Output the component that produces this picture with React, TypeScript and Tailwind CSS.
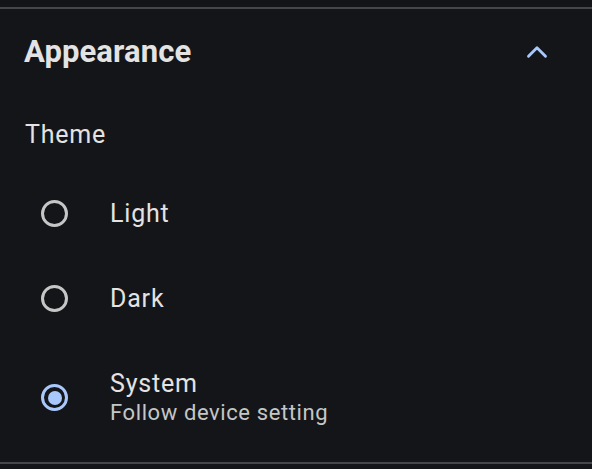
import { ChevronUp } from "lucide-react";

type Option = { id: string; label: string; hint?: string };

const options: Option[] = [
  { id: "light", label: "Light" },
  { id: "dark", label: "Dark" },
  { id: "system", label: "System", hint: "Follow device setting" },
];

const Radio = ({ checked }: { checked: boolean }) =>
  checked ? (
    <span className="grid h-[27px] w-[27px] shrink-0 place-items-center rounded-full border-[3px] border-[#a8c7fa]">
      <span className="h-[14px] w-[14px] rounded-full bg-[#a8c7fa]" />
    </span>
  ) : (
    <span className="h-[27px] w-[27px] shrink-0 rounded-full border-[3px] border-[#c4c7c5]" />
  );

const App = () => {
  const selected = "system";
  return (
    <div className="h-[469px] w-[592px] overflow-hidden bg-[#141519] font-['Roboto',sans-serif] text-[#e3e3e3]">
      <div className="h-[7px]" />
      <div className="h-[2px] bg-[#44474c]" />
      <section className="h-[453px]">
        <div className="flex items-center justify-between pl-[24px] pr-[38px] pt-[21px]">
          <h2 className="text-[31px] font-bold leading-[44px] tracking-[0.1px]">Appearance</h2>
          <ChevronUp className="h-[34px] w-[34px] text-[#a8c7fa]" strokeWidth={2} />
        </div>
        <div className="mt-[45px] pl-[25px] text-[25px] leading-[32px] tracking-[0.8px]">Theme</div>
        <ul className="mt-[20px]">
          {options.map((o) => (
            <li key={o.id} className="flex items-center gap-[42px] py-[27px] pl-[41px]">
              <Radio checked={o.id === selected} />
              <div>
                <div className="text-[25px] leading-[31px] tracking-[0.8px]">{o.label}</div>
                {o.hint && <div className="text-[22px] leading-[28px] tracking-[0.6px] text-[#c4c7c5]">{o.hint}</div>}
              </div>
            </li>
          ))}
        </ul>
      </section>
      <div className="h-[2px] bg-[#44474c]" />
    </div>
  );
};

export default App;
